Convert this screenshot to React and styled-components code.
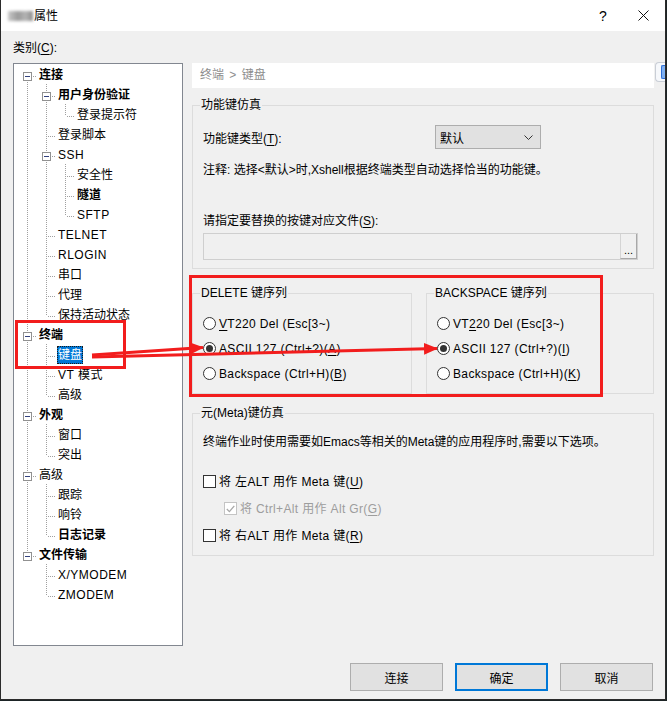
import React from "react";
import styled, { createGlobalStyle } from "styled-components";

const GlobalStyle = createGlobalStyle`
  html, body {
    margin: 0;
    padding: 0;
    background: #1d2426;
  }
  body {
    font-family: "Liberation Sans", "Noto Sans CJK SC", sans-serif;
    font-size: 12px;
    color: #000;
  }
  * {
    box-sizing: border-box;
  }
`;

const Stage = styled.div`
  position: relative;
  width: 667px;
  height: 701px;
`;

const Window = styled.div`
  width: 666px;
  height: 700px;
  background: #f0f0f0;
  border: 1px solid #2b2b2b;
  border-top: none;
  display: flex;
  flex-direction: column;
`;

const TitleBar = styled.div`
  height: 31px;
  flex: none;
  background: #fff;
  display: flex;
  align-items: center;
  padding-left: 7px;
`;

const BlurredName = styled.span`
  width: 25px;
  height: 10px;
  margin-right: 1px;
  background: linear-gradient(90deg, #c8c8c8, #9a9a9a 40%, #b4b4b4 70%, #8c8c8c);
  filter: blur(1.5px);
`;

const Title = styled.span`
  line-height: 16px;
`;

const TitleButton = styled.span`
  width: ${({ $w }) => $w}px;
  height: 31px;
  display: flex;
  align-items: center;
  justify-content: center;
  font-size: 14px;
  margin-left: ${({ $auto }) => ($auto ? "auto" : "0")};
`;

const Body = styled.div`
  flex: 1;
  display: flex;
  flex-direction: column;
  padding: 9px 11px 8px 12px;
`;

const CategoryLabel = styled.div`
  line-height: 16px;
  margin-bottom: 7px;
`;

const U = styled.span`
  text-decoration: underline;
  text-underline-offset: 2px;
`;

const Main = styled.div`
  display: flex;
  gap: 9px;
  height: 583px;
`;

const Tree = styled.div`
  width: 170px;
  flex: none;
  background: #fff;
  border: 1px solid #828790;
  padding: 0 0 0 4px;
`;

const TreeRow = styled.div`
  display: flex;
  height: 20px;
`;

const Guide = styled.span`
  position: relative;
  flex: none;
  width: 19px;

  &::before {
    content: "";
    position: absolute;
    left: 9px;
    width: 1px;
    top: ${({ $v }) => ($v === "bottom" ? "12px" : "0")};
    bottom: ${({ $v }) => ($v === "top" ? "8px" : "0")};
    display: ${({ $v }) => ($v === "none" ? "none" : "block")};
    background: repeating-linear-gradient(to bottom, #a0a0a0 0 1px, transparent 1px 2px);
  }

  &::after {
    content: "";
    position: absolute;
    left: 10px;
    right: 0;
    top: 12px;
    height: 1px;
    display: ${({ $h }) => ($h ? "block" : "none")};
    background: repeating-linear-gradient(to right, transparent 0 1px, #a0a0a0 1px 2px);
  }
`;

const Expander = styled.span`
  position: absolute;
  z-index: 1;
  left: 5px;
  top: 8px;
  width: 9px;
  height: 9px;
  border: 1px solid #919191;
  background: #fff;

  &::after {
    content: "";
    position: absolute;
    left: 1px;
    top: 3px;
    width: 5px;
    height: 1px;
    background: #33427e;
  }
`;

const TreeLabel = styled.span`
  align-self: center;
  margin: 1px 0 0 1px;
  padding: ${({ $selected }) => ($selected ? "0" : "1px")};
  line-height: 16px;
  white-space: nowrap;
  letter-spacing: ${({ $latin }) => ($latin ? "0.5px" : "0")};
  font-weight: ${({ $bold }) => ($bold ? 700 : 400)};
  background: ${({ $selected }) => ($selected ? "#0078d7" : "transparent")};
  color: ${({ $selected }) => ($selected ? "#fff" : "#000")};
  border: ${({ $selected }) => ($selected ? "1px dotted #1a1a1a" : "none")};
`;

const Panel = styled.div`
  flex: 1;
  display: flex;
  flex-direction: column;
`;

const Breadcrumb = styled.div`
  height: 25px;
  background: #fff;
  padding-left: 8px;
  line-height: 25px;
  color: #8d8d8d;
  word-spacing: 2px;
`;

const Group = styled.fieldset`
  margin: ${({ $mt }) => $mt}px 0 0 0;
  padding: 0;
  min-width: 0;
  border: 1px solid #dcdcdc;
`;

const Legend = styled.legend`
  margin-left: 7px;
  padding: 0 1px;
  line-height: 16px;
`;

const GroupBody = styled.div`
  padding: ${({ $pt }) => $pt}px 10px ${({ $pb }) => $pb}px 10px;
`;

const FieldRow = styled.div`
  display: grid;
  grid-template-columns: 232px 106px;
  align-items: center;
`;

const Select = styled.div`
  height: 24px;
  background: #e1e1e1;
  border: 1px solid #adadad;
  display: flex;
  align-items: center;
  justify-content: space-between;
  padding: 0 7px 0 4px;
`;

const Text = styled.div`
  line-height: 16px;
  margin-top: ${({ $mt }) => $mt || 0}px;
  white-space: nowrap;
`;

const PathInput = styled.div`
  margin-top: 4px;
  height: 27px;
  width: 435px;
  background: #f0f0f0;
  border: 1px solid #cfcfcf;
  display: flex;
  justify-content: flex-end;
`;

const BrowseButton = styled.div`
  width: 17px;
  border-left: 1px solid #d4d4d4;
  border-right: 1px solid #a8a8a8;
  border-bottom: 1px solid #a8a8a8;
  background: #f0f0f0;
  display: flex;
  align-items: flex-end;
  justify-content: center;
  padding-bottom: 2px;
  font-size: 11px;
  line-height: 12px;
`;

const SequenceRow = styled.div`
  margin-top: 16px;
  display: grid;
  grid-template-columns: 220px 1fr;
  gap: 14px;
`;

const OptionRow = styled.div`
  display: flex;
  align-items: center;
  gap: 3px;
  height: ${({ $h }) => $h}px;
  padding-left: ${({ $indent }) => ($indent ? 21 : 0)}px;
  line-height: 16px;
  letter-spacing: 0.35px;
  white-space: nowrap;
  color: ${({ $dim }) => ($dim ? "#9d9d9d" : "#000")};
`;

const Radio = styled.span`
  width: 13px;
  height: 13px;
  flex: none;
  border-radius: 50%;
  border: 1px solid #333;
  background: #fff;
  display: flex;
  align-items: center;
  justify-content: center;

  &::after {
    content: "";
    width: 7px;
    height: 7px;
    border-radius: 50%;
    background: #333;
    display: ${({ $checked }) => ($checked ? "block" : "none")};
  }
`;

const Check = styled.span`
  width: 13px;
  height: 13px;
  flex: none;
  border: 1px solid ${({ $dim }) => ($dim ? "#c4c4c4" : "#333")};
  background: #fff;
  display: flex;
  align-items: center;
  justify-content: center;
`;

const Spacer = styled.div`
  height: ${({ $h }) => $h}px;
`;

const Footer = styled.div`
  margin-top: 17px;
  display: flex;
  justify-content: flex-end;
  gap: 12px;
  padding-right: 1px;
`;

const Button = styled.div`
  width: 93px;
  height: 28px;
  background: #e1e1e1;
  border: ${({ $primary }) => ($primary ? "2px solid #0078d7" : "1px solid #adadad")};
  display: flex;
  align-items: center;
  justify-content: center;
`;

const Annotations = styled.svg`
  position: absolute;
  left: 0;
  top: 0;
  pointer-events: none;
`;

const SideTab = styled.div`
  position: absolute;
  left: 655px;
  top: 62px;
  width: 10px;
  height: 20px;
  border: 1px solid #c9ced6;
  border-right: none;
  border-radius: 4px 0 0 4px;
  background: #f6f8fb;
  display: flex;
  align-items: center;
  justify-content: flex-end;

  &::after {
    content: "";
    width: 3px;
    height: 12px;
    border: 1px solid #2f6fd6;
    border-right: none;
    border-radius: 2px 0 0 2px;
    background: #7fb0f0;
  }
`;

const tree = [
  {
    label: "连接",
    bold: true,
    children: [
      { label: "用户身份验证", bold: true, children: [{ label: "登录提示符" }] },
      { label: "登录脚本" },
      {
        label: "SSH",
        children: [{ label: "安全性" }, { label: "隧道", bold: true }, { label: "SFTP" }],
      },
      { label: "TELNET" },
      { label: "RLOGIN" },
      { label: "串口" },
      { label: "代理" },
      { label: "保持活动状态" },
    ],
  },
  {
    label: "终端",
    bold: true,
    children: [{ label: "键盘", selected: true }, { label: "VT 模式" }, { label: "高级" }],
  },
  { label: "外观", bold: true, children: [{ label: "窗口" }, { label: "突出" }] },
  {
    label: "高级",
    children: [{ label: "跟踪" }, { label: "响铃" }, { label: "日志记录", bold: true }],
  },
  { label: "文件传输", bold: true, children: [{ label: "X/YMODEM" }, { label: "ZMODEM" }] },
];

// turn the nested tree into rows, remembering which ancestor lines keep going
function flatten(nodes, depth = 0, guides = [], out = []) {
  nodes.forEach((node, i) => {
    const last = i === nodes.length - 1;
    const first = depth === 0 && i === 0;
    out.push({ ...node, guides, last, first });
    if (node.children) flatten(node.children, depth + 1, [...guides, !last], out);
  });
  return out;
}

const rows = flatten(tree);

const Chevron = () => (
  <svg width="9" height="5" viewBox="0 0 9 5">
    <polyline points="0.5,0.5 4.5,4.5 8.5,0.5" fill="none" stroke="#333" strokeWidth="1" />
  </svg>
);

const CloseIcon = () => (
  <svg width="11" height="11" viewBox="0 0 11 11">
    <path d="M0.5 0.5 L10.5 10.5 M10.5 0.5 L0.5 10.5" stroke="#111" strokeWidth="1" />
  </svg>
);

const Tick = ({ color }) => (
  <svg width="9" height="8" viewBox="0 0 9 8">
    <polyline points="0.8,4 3.4,6.6 8.3,0.8" fill="none" stroke={color} strokeWidth="1.3" />
  </svg>
);

const App = () => {
  return (
    <Stage>
      <GlobalStyle />
      <Window>
        <TitleBar>
          <BlurredName />
          <Title>属性</Title>
          <TitleButton $w={36} $auto>
            ?
          </TitleButton>
          <TitleButton $w={44}>
            <CloseIcon />
          </TitleButton>
        </TitleBar>
        <Body>
          <CategoryLabel>
            类别(<U>C</U>):
          </CategoryLabel>
          <Main>
            <Tree>
              {rows.map((row, i) => (
                <TreeRow key={i}>
                  {row.guides.map((g, j) => (
                    <Guide key={j} $v={g ? "full" : "none"} />
                  ))}
                  <Guide $v={row.first ? "bottom" : row.last ? "top" : "full"} $h>
                    {row.children && <Expander />}
                  </Guide>
                  <TreeLabel
                    $bold={row.bold}
                    $selected={row.selected}
                    $latin={/[A-Z]/.test(row.label)}
                  >
                    {row.label}
                  </TreeLabel>
                </TreeRow>
              ))}
            </Tree>
            <Panel>
              <Breadcrumb>终端 &gt; 键盘</Breadcrumb>

              <Group $mt={9}>
                <Legend>功能键仿真</Legend>
                <GroupBody $pt={12} $pb={8}>
                  <FieldRow>
                    <span>
                      功能键类型(<U>T</U>):
                    </span>
                    <Select>
                      <span>默认</span>
                      <Chevron />
                    </Select>
                  </FieldRow>
                  <Text $mt={13}>注释: 选择&lt;默认&gt;时,Xshell根据终端类型自动选择恰当的功能键。</Text>
                  <Text $mt={35}>
                    请指定要替换的按键对应文件(<U>S</U>):
                  </Text>
                  <PathInput>
                    <BrowseButton>...</BrowseButton>
                  </PathInput>
                </GroupBody>
              </Group>

              <SequenceRow>
                <Group $mt={0}>
                  <Legend>DELETE 键序列</Legend>
                  <GroupBody $pt={10} $pb={7}>
                    <OptionRow $h={25}>
                      <Radio />
                      <span>
                        <U>V</U>T220 Del (Esc[3~)
                      </span>
                    </OptionRow>
                    <OptionRow $h={25}>
                      <Radio $checked />
                      <span>
                        ASCII 127 (Ctrl+?)(<U>A</U>)
                      </span>
                    </OptionRow>
                    <OptionRow $h={25}>
                      <Radio />
                      <span>
                        Backspace (Ctrl+H)(<U>B</U>)
                      </span>
                    </OptionRow>
                  </GroupBody>
                </Group>
                <Group $mt={0}>
                  <Legend>BACKSPACE 键序列</Legend>
                  <GroupBody $pt={10} $pb={7}>
                    <OptionRow $h={25}>
                      <Radio />
                      <span>
                        VT<U>2</U>20 Del (Esc[3~)
                      </span>
                    </OptionRow>
                    <OptionRow $h={25}>
                      <Radio $checked />
                      <span>
                        ASCII 127 (Ctrl+?)(<U>I</U>)
                      </span>
                    </OptionRow>
                    <OptionRow $h={25}>
                      <Radio />
                      <span>
                        Backspace (Ctrl+H)(<U>K</U>)
                      </span>
                    </OptionRow>
                  </GroupBody>
                </Group>
              </SequenceRow>

              <Group $mt={11}>
                <Legend>元(Meta)键仿真</Legend>
                <GroupBody $pt={13} $pb={6}>
                  <Text>终端作业时使用需要如Emacs等相关的Meta键的应用程序时,需要以下选项。</Text>
                  <Spacer $h={18} />
                  <OptionRow $h={27}>
                    <Check />
                    <span>
                      将 左ALT 用作 Meta 键(<U>U</U>)
                    </span>
                  </OptionRow>
                  <OptionRow $h={27} $indent $dim>
                    <Check $dim>
                      <Tick color="#a8a8a8" />
                    </Check>
                    <span>
                      将 Ctrl+Alt 用作 Alt Gr(<U>G</U>)
                    </span>
                  </OptionRow>
                  <OptionRow $h={27}>
                    <Check />
                    <span>
                      将 右ALT 用作 Meta 键(<U>R</U>)
                    </span>
                  </OptionRow>
                </GroupBody>
              </Group>
            </Panel>
          </Main>
          <Footer>
            <Button>连接</Button>
            <Button $primary>确定</Button>
            <Button>取消</Button>
          </Footer>
        </Body>
      </Window>

      <SideTab />

      <Annotations width="667" height="701" viewBox="0 0 667 701">
        <defs>
          <marker
            id="head"
            markerUnits="userSpaceOnUse"
            markerWidth="14"
            markerHeight="12"
            refX="13"
            refY="6"
            orient="auto"
          >
            <path d="M0 0 L14 6 L0 12 Z" fill="#f21d1d" />
          </marker>
        </defs>
        <rect x="190.5" y="276.5" width="411" height="119" fill="none" stroke="#f21d1d" strokeWidth="3" />
        <rect x="16.5" y="321.5" width="108" height="46" fill="none" stroke="#f21d1d" strokeWidth="3" />
        <line x1="92" y1="355" x2="203" y2="347.5" stroke="#f21d1d" strokeWidth="3" markerEnd="url(#head)" />
        <line x1="92" y1="357" x2="437" y2="348.5" stroke="#f21d1d" strokeWidth="3" markerEnd="url(#head)" />
      </Annotations>
    </Stage>
  );
};

export default App;
